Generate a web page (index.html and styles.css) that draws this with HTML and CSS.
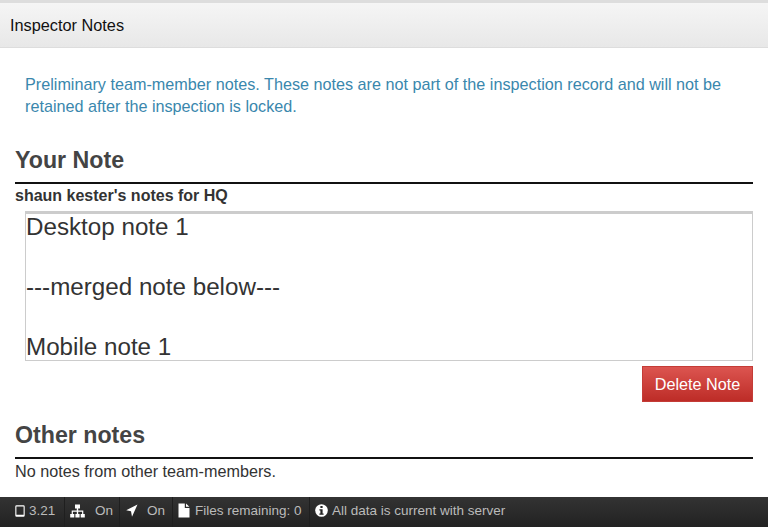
FILE: index.html
```html
<!DOCTYPE html>
<html>

<head>
  <title>Inspector Notes</title>
  <link rel="stylesheet" href="styles.css">
</head>

<body>
  <div class="page">
    <div class="panel-heading">Inspector Notes</div>

    <div class="content">
      <p class="info">Preliminary team-member notes. These notes are not part of the inspection record and will not be retained after the inspection is locked.</p>

      <h2>Your Note</h2>
      <label for="note">shaun kester's notes for HQ</label>
      <div class="note-row">
        <textarea id="note" rows="5">Desktop note 1

---merged note below---

Mobile note 1</textarea>
      </div>
      <div class="actions">
        <button>Delete Note</button>
      </div>

      <h2 class="other">Other notes</h2>
      <p class="empty">No notes from other team-members.</p>
    </div>

    <div class="status-bar">
      <div class="status-item version">
        <svg class="icon" width="10" height="12" viewBox="0 0 10 12"><path fill="#fff" fill-rule="evenodd" d="M1.500 .3h7a1.200 1.200 0 0 1 1.200 1.200v9a1.200 1.200 0 0 1-1.200 1.200h-7a1.200 1.200 0 0 1-1.200-1.200v-9a1.200 1.200 0 0 1 1.200-1.200zM1.400 1.400v8.400h7.200V1.400z"/></svg>
        <span>3.21</span>
      </div>
      <div class="status-item network">
        <svg class="icon" width="15" height="14" viewBox="0 0 15 14"><path fill="#fff" d="M5 .5h5v4H8.200v2h5.100V10h1.500v3.500h-4.100V10h1.400V7.800H8.200V10h1.400v3.500H5.400V10h1.400V7.800H2.900V10h1.400v3.500H.2V10h1.500V6.500h5.100v-2H5z"/></svg>
        <span>On</span>
      </div>
      <div class="status-item location">
        <svg class="icon" width="12" height="13" viewBox="0 0 12 13"><path fill="#fff" d="M11.500 .5 6 12.800 5 7.200 .2 6.200z"/></svg>
        <span>On</span>
      </div>
      <div class="status-item files">
        <svg class="icon" width="12" height="15" viewBox="0 0 12 15"><path fill="#fff" d="M.5 .5h6.300v4.400h4.700v9.600H.5zM8 .6l3.400 3.200H8z"/></svg>
        <span>Files remaining: 0</span>
      </div>
      <div class="status-item sync">
        <svg class="icon" width="13" height="13" viewBox="0 0 13 13"><circle cx="6.500" cy="6.500" r="6.300" fill="#fff"/><rect x="5.400" y="2" width="2.200" height="2" fill="#222"/><path fill="#222" d="M4.400 5.200h3.200v4.200h1v1.400H4.400V9.400h1V6.600h-1z"/></svg>
        <span>All data is current with server</span>
      </div>
    </div>
  </div>
</body>

</html>
```

FILE: styles.css
```css
html,
body {
  margin: 0;
  padding: 0;
  height: 100%;
}

body {
  font-family: "Liberation Sans", Arial, sans-serif;
  background-color: #fff;
  color: #333;
  overflow: hidden;
}

.page {
  height: 527px;
  display: flex;
  flex-direction: column;
  box-sizing: border-box;
  border-top: 3px solid #ddd;
}

.panel-heading {
  height: 44px;
  line-height: 45px;
  padding-left: 10px;
  font-size: 16.3px;
  color: #111;
  background: linear-gradient(#f5f5f5, #e8e8e8);
  border-bottom: 1px solid #ddd;
}

.content {
  flex: 1;
  padding: 0 15px;
}

.info {
  margin: 26px 10px 0;
  font-size: 16.2px;
  line-height: 21.5px;
  color: #3a87ad;
}

h2 {
  margin: 27px 0 0;
  font-size: 23.2px;
  line-height: 33px;
  font-weight: bold;
  color: #444;
  padding-bottom: 5px;
  border-bottom: 2px solid #111;
}

h2.other {
  margin-top: 17px;
}

label {
  display: block;
  margin-top: 1px;
  font-size: 16px;
  line-height: 22px;
  font-weight: bold;
}

.note-row {
  margin: 4px 0 0 10px;
}

textarea {
  display: block;
  box-sizing: border-box;
  width: 100%;
  height: 150px;
  padding: 0;
  font-family: inherit;
  font-size: 24.2px;
  line-height: 30px;
  color: #333;
  background-color: #fff;
  border: 1px solid #ccc;
  box-shadow: inset 0 2px 0 #ccc;
  border-radius: 0;
  resize: none;
  overflow: hidden;
  outline: none;
}

.actions {
  display: flex;
  justify-content: flex-end;
  margin-top: 5px;
}

button {
  width: 111px;
  height: 36px;
  padding: 0;
  font-family: inherit;
  font-size: 16.2px;
  color: #fff;
  background: linear-gradient(#dc5550, #bd2c27);
  border: 1px solid #c43c37;
  border-radius: 0;
  cursor: pointer;
}

.empty {
  margin: 1px 0 0;
  font-size: 16.2px;
  line-height: 22px;
}

.status-bar {
  height: 30px;
  display: flex;
  align-items: stretch;
  background: linear-gradient(#333, #222);
  color: #bbb;
  font-size: 13.5px;
}

.status-item {
  display: flex;
  align-items: center;
  box-sizing: border-box;
  padding-bottom: 3px;
  border-right: 1px solid #1f1f1f;
}

.status-item:last-child {
  border-right: none;
}

.icon {
  flex: none;
}

.version {
  width: 65px;
  padding-left: 15px;
  gap: 4px;
}

.network {
  width: 55px;
  padding-left: 5px;
  gap: 10px;
}

.location {
  width: 53px;
  padding-left: 6px;
  gap: 9px;
}

.files {
  width: 137px;
  padding-left: 5px;
  gap: 5px;
}

.sync {
  padding-left: 5px;
  gap: 4px;
}
```
